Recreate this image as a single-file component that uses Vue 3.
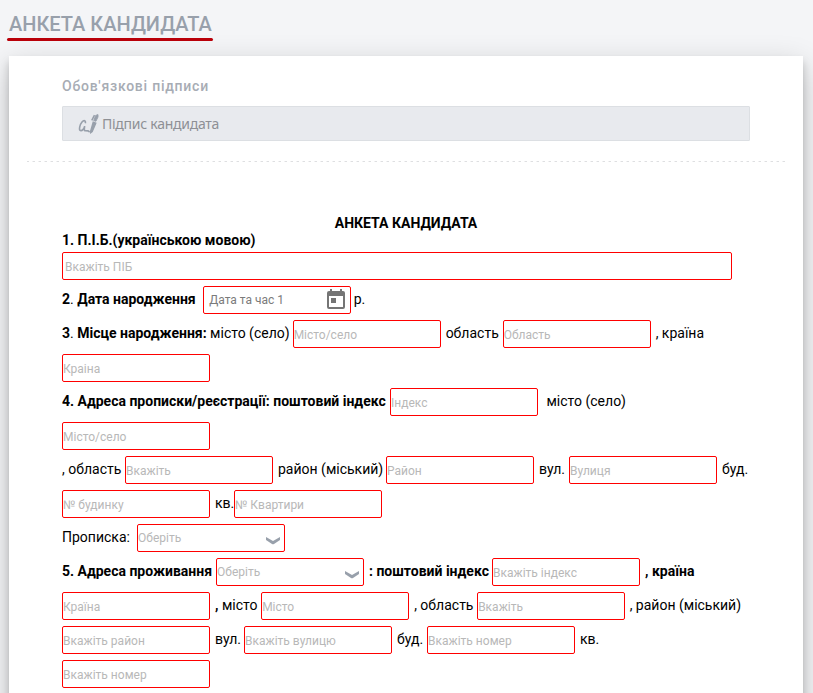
<script setup>
const rows = [
  [{ b: '2' }, { t: '. ' }, { b: 'Дата народження', w: 126 }, { date: 'Дата та час 1' }, { t: 'р.', near: true }],
  [{ b: '3' }, { t: '. ' }, { b: 'Місце народження:' }, { t: ' місто (село)', tail: true }, { f: 'Місто/село' }, { t: 'область', w: 57 }, { f: 'Область' }, { t: ', країна' }],
  [{ f: 'Краіна' }],
  [{ b: '4. Адреса прописки/реєстрації: поштовий індекс', w: 328 }, { f: 'Індекс' }, { t: ' місто (село)' }],
  [{ f: 'Місто/село' }],
  [{ t: ', область', w: 63 }, { f: 'Вкажіть' }, { t: 'район (міський)', w: 108 }, { f: 'Район' }, { t: 'вул.', w: 30 }, { f: 'Вулиця' }, { t: 'буд.' }],
  [{ f: '№ будинку' }, { t: 'кв.', w: 19 }, { f: '№ Квартири' }],
  [{ t: 'Прописка:', w: 75 }, { s: 'Оберіть' }],
  [{ b: '5. Адреса проживання', w: 154 }, { s: 'Оберіть' }, { b: ': поштовий індекс', w: 123 }, { f: 'Вкажіть індекс' }, { b: ', країна' }],
  [{ f: 'Країна' }, { b: ',' }, { t: ' місто', w: 42.7 }, { f: 'Місто' }, { t: ', область', w: 63 }, { f: 'Вкажіть' }, { t: ', район (міський)', close: true }],
  [{ f: 'Вкажіть район' }, { t: 'вул.', w: 29 }, { f: 'Вкажіть вулицю' }, { t: 'буд.', w: 30 }, { f: 'Вкажіть номер' }, { t: 'кв.' }],
  [{ f: 'Вкажіть номер' }],
]
const width = (c) => (c.w ? { width: c.w + 'px' } : null)
</script>

<template>
  <div class="page">
    <h1 class="title">АНКЕТА КАНДИДАТА</h1>
    <main class="sheet">
      <h2 class="subtitle">Обов'язкові підписи</h2>
      <div class="sign">
        <svg class="pen" width="21" height="20" viewBox="0 0 21 20" fill="none" stroke="#98a0ab">
          <path d="M7.3 9.2C8 6.3 5.8 5.9 4 8C1.6 10.800 .8 16 2.300 16.500C4.300 17 6.100 14 6.700 12.200C6.200 14.700 6 17.300 7.600 16.700L10 16.900L11.700 18" stroke-width="1.600" />
          <path d="M17.800 9.200L14.200 17.500L12.700 18.700L12.700 16.800L15.200 8.200Z" fill="#98a0ab" stroke-width="1.300" />
          <path d="M17.700 1.400L20 .6L20 3L17.900 7.300L15.700 6.500Z" fill="#98a0ab" stroke-width=".9" />
          <path d="M16.500 1.200L13.800 6.300" stroke-width="1.600" />
        </svg>
        <span>Підпис кандидата</span>
      </div>
      <div class="divider"></div>
      <section class="form">
        <h3 class="heading">АНКЕТА КАНДИДАТА</h3>
        <p class="label">1. П.І.Б.(українською мовою)</p>
        <div class="field wide">Вкажіть ПІБ</div>
        <div v-for="(row, i) in rows" :key="i" class="row">
          <template v-for="(c, j) in row" :key="j">
            <div v-if="c.f" class="field">{{ c.f }}</div>
            <div v-else-if="c.s" class="field select">
              <span>{{ c.s }}</span>
              <svg width="16" height="8" viewBox="0 0 16 8"><path d="M1 0L8 3.900L15 0V3.100L9 7Q8 7.500 7 7L1 3.100Z" fill="#98a0ab" /></svg>
            </div>
            <div v-else-if="c.date" class="field date">
              <span>{{ c.date }}</span>
              <svg width="18" height="20" viewBox="0 0 18 20"><path fill="#757575" fill-rule="evenodd" d="M3 0H5V2H13V0H15V2H16A2 2 0 0 1 18 4V18A2 2 0 0 1 16 20H2A2 2 0 0 1 0 18V4A2 2 0 0 1 2 2H3ZM2 7V18H16V7ZM4 9H9V14H4Z" /></svg>
            </div>
            <b v-else-if="c.b" class="text" :style="width(c)">{{ c.b }}</b>
            <span v-else class="text" :class="{ near: c.near, close: c.close, tail: c.tail }" :style="width(c)">{{ c.t }}</span>
          </template>
        </div>
      </section>
    </main>
  </div>
</template>

<style>
body {
  background: #f4f5f7;
  overflow: hidden;
}
</style>

<style scoped>
.page {
  box-sizing: border-box;
  height: 693px;
  overflow: hidden;
  padding: 9px 10px 0 9px;
  font-family: Roboto, sans-serif;
}
h1, h2, h3, p { margin: 0; }
.title {
  display: flex;
  flex-direction: column;
  width: 206px;
  height: 33px;
  margin: 0 0 14px -2px;
  text-indent: 2px;
  color: #98a0ab;
  font-size: 20px;
  font-weight: 500;
  line-height: 30px;
  white-space: nowrap;
}
.title::after {
  content: "";
  height: 3px;
  margin-top: -.6px;
  border-radius: 1.5px;
  background: #b90009;
  transform: translateY(-.1px);
}
.sheet {
  box-sizing: border-box;
  height: 760px;
  padding: 20px 53px 0;
  background: #fff;
  box-shadow: 0 10px 30px rgba(0, 0, 0, .2), 0 6px 8px rgba(0, 0, 0, .18);
}
.subtitle {
  height: 30px;
  color: #a7acb4;
  font-size: 14px;
  font-weight: 500;
  line-height: 20px;
  letter-spacing: .76px;
}
.sign {
  box-sizing: border-box;
  display: flex;
  align-items: center;
  gap: 3px;
  height: 35px;
  padding-left: 15px;
  border: 1px solid #dcdfe3;
  border-radius: 1px;
  background: #e8eaee;
  color: #8e9095;
  font: 14px "Noto Sans", sans-serif;
  letter-spacing: -.26px;
}
.divider {
  height: 1px;
  margin: 20px -35px 0;
  background: repeating-linear-gradient(90deg, #dedfe1 0 2px, transparent 2px 5px, #f0f0f1 5px 6px);
}
.form {
  padding-top: 53px;
  color: #000;
  font-size: 14px;
}
.heading {
  font-size: 14px;
  line-height: 17px;
  text-align: center;
}
.label {
  height: 20px;
  font-weight: 700;
  line-height: 17px;
}
.row {
  display: flex;
  height: 34px;
}
.text {
  flex: none;
  line-height: 26px;
  white-space: pre;
}
.field {
  box-sizing: border-box;
  flex: none;
  width: 148px;
  height: 28px;
  border: 1px solid red;
  border-radius: 2px;
  color: #b8b8b8;
  font-size: 12px;
  line-height: 28px;
}
.field + .text { margin-left: 5px; }
.field + .near { margin-left: 2.5px; }
.field + .close { margin-left: 4.5px; }
.tail { padding-right: 3px; }
.wide {
  width: 670px;
  margin-bottom: 6px;
  padding-left: 2px;
}
.select, .date {
  display: flex;
  justify-content: space-between;
  line-height: 26px;
}
.select { padding-right: 3px; }
.select svg { margin-top: 12px; }
.date {
  padding: 0 5px;
  color: #7b7b7b;
}
.date svg { margin-top: 2px; }
</style>
